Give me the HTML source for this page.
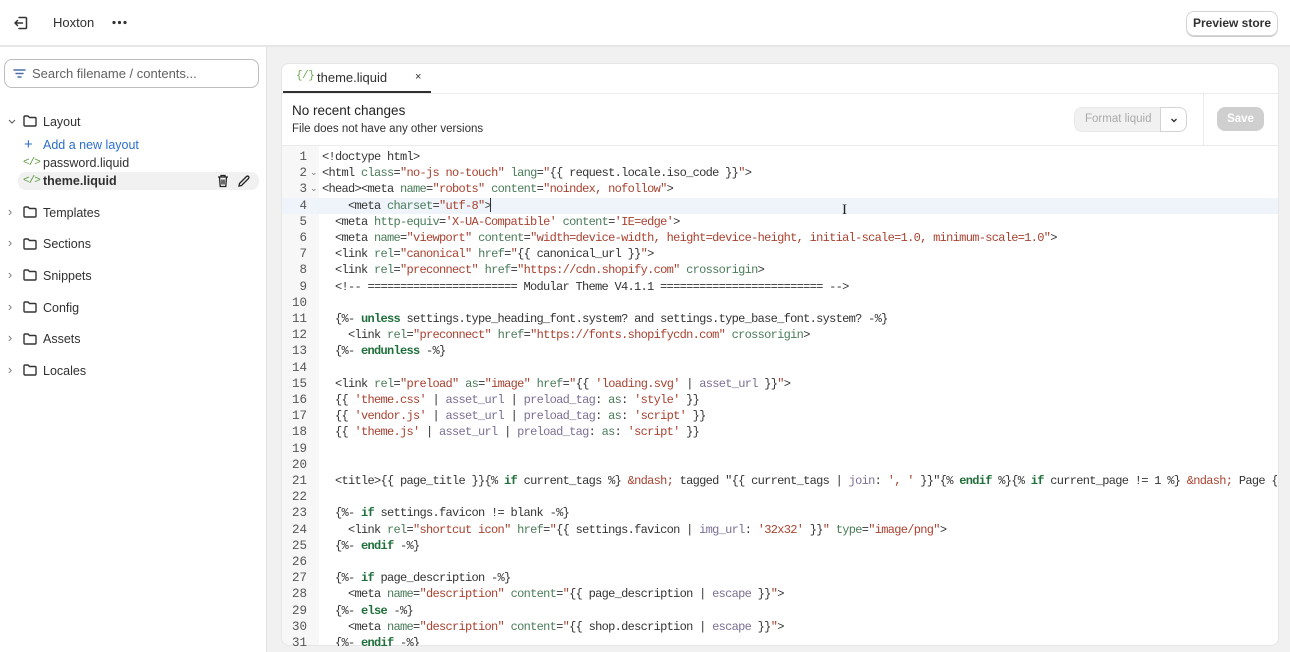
<!DOCTYPE html>
<html><head><meta charset="utf-8">
<style>
*{box-sizing:border-box;margin:0;padding:0}
body{width:1290px;height:652px;overflow:hidden;background:#f1f1f1;font-family:"Liberation Sans",sans-serif;color:#303030;position:relative}
.top{position:absolute;left:0;top:0;width:1290px;height:47px;background:#fff;border-bottom:2px solid #e6e6e6}
.side{position:absolute;left:0;top:47px;width:267px;height:605px;background:#fff;border-right:1px solid #e3e3e3}
.abs{position:absolute}
.card{position:absolute;left:281px;top:63px;width:998px;height:583px;background:#fff;border-radius:8px;border:1px solid #e6e6e6;overflow:hidden}
.code{position:absolute;font-family:"Liberation Mono",monospace;font-size:12px;letter-spacing:-0.7px;color:#333;white-space:pre;line-height:16.2px}
.a{color:#4a7c59}.s{color:#a8412f}.k{color:#1f6f3a;font-weight:bold}.f{color:#7a6f95}
.ln{position:absolute;left:0;width:26px;text-align:right;font-family:"Liberation Mono",monospace;font-size:12.5px;color:#555;line-height:16.2px}
.tree{position:absolute;font-size:12.5px;color:#303030}
.lq{position:absolute;color:#5a9c3c;font-family:'Liberation Mono',monospace;font-size:11px;letter-spacing:-1px}
</style></head><body>
<div class="top">
 <svg class="abs" style="left:13px;top:15px" width="16" height="16" viewBox="0 0 16 16" fill="none" stroke="#333" stroke-width="1.5" stroke-linecap="round" stroke-linejoin="round"><path d="M6 2.5h6.5a1 1 0 0 1 1 1v9a1 1 0 0 1-1 1H6"/><path d="M9.5 8H2M4.5 5.5L2 8l2.5 2.5"/></svg>
 <div class="abs" style="left:53px;top:15px;font-size:13px">Hoxton</div>
 <svg class="abs" style="left:112px;top:20px" width="15" height="5" viewBox="0 0 15 5" fill="#333"><circle cx="2" cy="2.5" r="1.6"/><circle cx="7.5" cy="2.5" r="1.6"/><circle cx="13" cy="2.5" r="1.6"/></svg>
 <div class="abs" style="left:1186px;top:11px;width:92px;height:25px;border:1px solid #d4d4d4;border-radius:8px;box-shadow:0 1px 0 #ccc;font-size:12px;font-weight:bold;text-align:center;line-height:23px;color:#303030">Preview store</div>
</div>
<div class="side">
 <div class="abs" style="left:4px;top:12px;width:255px;height:29px;border:1px solid #bdbdbd;border-radius:8px"></div>
 <svg class="abs" style="left:13px;top:20px" width="13" height="13" viewBox="0 0 13 13" stroke="#4a6fa5" stroke-width="1.4" stroke-linecap="round"><path d="M1 3h11M3 6.5h7M5 10h3"/></svg>
 <div class="abs" style="left:32px;top:19px;font-size:13px;color:#616161">Search filename / contents...</div>
</div>
<svg class="abs" style="left:7px;top:118px" width="10" height="8" viewBox="0 0 10 8" fill="none" stroke="#666" stroke-width="1.2"><path d="M2 2l3 3 3-3"/></svg>
<div class="tree" style="left:22px;top:113px"><svg width="16" height="16" viewBox="0 0 16 16" fill="none" stroke="#333" stroke-width="1.4" stroke-linejoin="round"><path d="M2 4a1 1 0 0 1 1-1h3l1.5 1.5H13a1 1 0 0 1 1 1V12a1 1 0 0 1-1 1H3a1 1 0 0 1-1-1z"/></svg></div>
<div class="tree" style="left:43px;top:115px">Layout</div>
<div class="tree" style="left:24px;top:136px;color:#2c6ecb;font-size:15px">+</div>
<div class="tree" style="left:43px;top:138px;color:#2c6ecb">Add a new layout</div>
<div class="lq" style="left:23px;top:157px">&lt;/&gt;</div>
<div class="tree" style="left:43px;top:156px">password.liquid</div>
<div class="abs" style="left:18px;top:172px;width:241px;height:18px;background:#f1f1f1;border-radius:8px"></div>
<div class="lq" style="left:23px;top:175px">&lt;/&gt;</div>
<div class="tree" style="left:43px;top:174px;font-weight:bold">theme.liquid</div>
<svg class="abs" style="left:216px;top:174px" width="14" height="14" viewBox="0 0 14 14" fill="none" stroke="#222" stroke-width="1.3"><path d="M2 3h10M5 3V1.5h4V3M3.5 3l.7 9.5h5.6L10.5 3M6 5.5v5M8 5.5v5"/></svg>
<svg class="abs" style="left:237px;top:174px" width="14" height="14" viewBox="0 0 14 14" fill="none" stroke="#222" stroke-width="1.3"><path d="M2 12l.5-2.5L9.5 2.5a1.4 1.4 0 0 1 2 2L4.5 11.5z"/></svg>
<div style="position:absolute;left:0;top:0">
 <div class="tree" style="left:8px;top:205px;color:#777">›</div><div class="tree" style="left:22px;top:204px"><svg width="16" height="16" viewBox="0 0 16 16" fill="none" stroke="#333" stroke-width="1.4"><path d="M2 4a1 1 0 0 1 1-1h3l1.5 1.5H13a1 1 0 0 1 1 1V12a1 1 0 0 1-1 1H3a1 1 0 0 1-1-1z"/></svg></div><div class="tree" style="left:43px;top:206px">Templates</div>
 <div class="tree" style="left:8px;top:236px;color:#777">›</div><div class="tree" style="left:22px;top:236px"><svg width="16" height="16" viewBox="0 0 16 16" fill="none" stroke="#333" stroke-width="1.4"><path d="M2 4a1 1 0 0 1 1-1h3l1.5 1.5H13a1 1 0 0 1 1 1V12a1 1 0 0 1-1 1H3a1 1 0 0 1-1-1z"/></svg></div><div class="tree" style="left:43px;top:237px">Sections</div>
 <div class="tree" style="left:8px;top:268px;color:#777">›</div><div class="tree" style="left:22px;top:267px"><svg width="16" height="16" viewBox="0 0 16 16" fill="none" stroke="#333" stroke-width="1.4"><path d="M2 4a1 1 0 0 1 1-1h3l1.5 1.5H13a1 1 0 0 1 1 1V12a1 1 0 0 1-1 1H3a1 1 0 0 1-1-1z"/></svg></div><div class="tree" style="left:43px;top:269px">Snippets</div>
 <div class="tree" style="left:8px;top:300px;color:#777">›</div><div class="tree" style="left:22px;top:299px"><svg width="16" height="16" viewBox="0 0 16 16" fill="none" stroke="#333" stroke-width="1.4"><path d="M2 4a1 1 0 0 1 1-1h3l1.5 1.5H13a1 1 0 0 1 1 1V12a1 1 0 0 1-1 1H3a1 1 0 0 1-1-1z"/></svg></div><div class="tree" style="left:43px;top:301px">Config</div>
 <div class="tree" style="left:8px;top:331px;color:#777">›</div><div class="tree" style="left:22px;top:331px"><svg width="16" height="16" viewBox="0 0 16 16" fill="none" stroke="#333" stroke-width="1.4"><path d="M2 4a1 1 0 0 1 1-1h3l1.5 1.5H13a1 1 0 0 1 1 1V12a1 1 0 0 1-1 1H3a1 1 0 0 1-1-1z"/></svg></div><div class="tree" style="left:43px;top:332px">Assets</div>
 <div class="tree" style="left:8px;top:363px;color:#777">›</div><div class="tree" style="left:22px;top:362px"><svg width="16" height="16" viewBox="0 0 16 16" fill="none" stroke="#333" stroke-width="1.4"><path d="M2 4a1 1 0 0 1 1-1h3l1.5 1.5H13a1 1 0 0 1 1 1V12a1 1 0 0 1-1 1H3a1 1 0 0 1-1-1z"/></svg></div><div class="tree" style="left:43px;top:364px">Locales</div>
</div>

<div class="card">
 <div class="abs" style="left:0;top:29px;width:998px;height:1px;background:#ebebeb"></div>
 <div class="abs" style="left:14px;top:6px;font-size:11px;color:#6aa84f;font-family:'Liberation Mono',monospace;letter-spacing:-0.5px">{/}</div>
 <div class="abs" style="left:35px;top:6px;font-size:13px">theme.liquid</div>
 <div class="abs" style="left:133px;top:7px;font-size:11px">×</div>
 <div class="abs" style="left:1px;top:27px;width:148px;height:2px;background:#303030"></div>
 <div class="abs" style="left:10px;top:39px;font-size:13.5px;color:#222">No recent changes</div>
 <div class="abs" style="left:10px;top:59px;font-size:11.5px;color:#303030">File does not have any other versions</div>
 <div class="abs" style="left:792px;top:43px;width:113px;height:25px;background:#f1f1f1;border:1px solid #e8e8e8;border-radius:8px"></div>
 <div class="abs" style="left:803px;top:49px;font-size:11.5px;color:#aaa">Format liquid</div>
 <div class="abs" style="left:878px;top:43px;width:27px;height:25px;background:#fff;border:1px solid #d4d4d4;border-radius:0 8px 8px 0"></div>
 <svg class="abs" style="left:887px;top:51px" width="10" height="10" viewBox="0 0 10 10" fill="none" stroke="#333" stroke-width="1.4"><path d="M2.5 4l2.5 2.5L7.5 4"/></svg>
 <div class="abs" style="left:921px;top:29px;width:1px;height:52px;background:#ebebeb"></div>
 <div class="abs" style="left:935px;top:43px;width:47px;height:24px;background:#cfcfcf;border-radius:8px;color:#fff;font-size:11.5px;font-weight:bold;text-align:center;line-height:24px">Save</div>
 <div class="abs" style="left:0;top:81px;width:998px;height:1px;background:#ebebeb"></div>
 <div class="abs" style="left:0;top:82px;width:37px;height:510px;background:#f7f7f7"></div>
 <div class="abs" style="left:0;top:134px;width:998px;height:16px;background:#eef4fa"></div>
</div>

<div class="ln" style="left:281px;top:149px">1<br>2<br>3<br>4<br>5<br>6<br>7<br>8<br>9<br>10<br>11<br>12<br>13<br>14<br>15<br>16<br>17<br>18<br>19<br>20<br>21<br>22<br>23<br>24<br>25<br>26<br>27<br>28<br>29<br>30<br>31</div>
<div class="abs" style="left:310px;top:167px;font-size:9px;color:#777">⌄</div>
<div class="abs" style="left:310px;top:183px;font-size:9px;color:#777">⌄</div>
<div class="abs" style="left:0;top:0;width:1277px;height:646px;overflow:hidden">
<div class="code" style="left:322px;top:149px">&lt;!doctype html&gt;
&lt;html <span class="a">class</span>=<span class="s">"no-js no-touch"</span> <span class="a">lang</span>=<span class="s">"</span>{{ request.locale.iso_code }}<span class="s">"</span>&gt;
&lt;head&gt;&lt;meta <span class="a">name</span>=<span class="s">"robots"</span> <span class="a">content</span>=<span class="s">"noindex, nofollow"</span>&gt;
    &lt;meta <span class="a">charset</span>=<span class="s">"utf-8"</span>&gt;
  &lt;meta <span class="a">http-equiv</span>=<span class="s">'X-UA-Compatible'</span> <span class="a">content</span>=<span class="s">'IE=edge'</span>&gt;
  &lt;meta <span class="a">name</span>=<span class="s">"viewport"</span> <span class="a">content</span>=<span class="s">"width=device-width, height=device-height, initial-scale=1.0, minimum-scale=1.0"</span>&gt;
  &lt;link <span class="a">rel</span>=<span class="s">"canonical"</span> <span class="a">href</span>=<span class="s">"</span>{{ canonical_url }}<span class="s">"</span>&gt;
  &lt;link <span class="a">rel</span>=<span class="s">"preconnect"</span> <span class="a">href</span>=<span class="s">"https://cdn.shopify.com"</span> <span class="a">crossorigin</span>&gt;
  &lt;!-- ======================= Modular Theme V4.1.1 ========================= --&gt;

  {%- <span class="k">unless</span> settings.type_heading_font.system? and settings.type_base_font.system? -%}
    &lt;link <span class="a">rel</span>=<span class="s">"preconnect"</span> <span class="a">href</span>=<span class="s">"https://fonts.shopifycdn.com"</span> <span class="a">crossorigin</span>&gt;
  {%- <span class="k">endunless</span> -%}

  &lt;link <span class="a">rel</span>=<span class="s">"preload"</span> <span class="a">as</span>=<span class="s">"image"</span> <span class="a">href</span>=<span class="s">"</span>{{ <span class="s">'loading.svg'</span> | <span class="f">asset_url</span> }}<span class="s">"</span>&gt;
  {{ <span class="s">'theme.css'</span> | <span class="f">asset_url</span> | <span class="f">preload_tag</span>: <span class="a">as</span>: <span class="s">'style'</span> }}
  {{ <span class="s">'vendor.js'</span> | <span class="f">asset_url</span> | <span class="f">preload_tag</span>: <span class="a">as</span>: <span class="s">'script'</span> }}
  {{ <span class="s">'theme.js'</span> | <span class="f">asset_url</span> | <span class="f">preload_tag</span>: <span class="a">as</span>: <span class="s">'script'</span> }}


  &lt;title&gt;{{ page_title }}{% <span class="k">if</span> current_tags %} <span class="s">&amp;ndash;</span> tagged "{{ current_tags | <span class="f">join</span>: <span class="s">', '</span> }}"{% <span class="k">endif</span> %}{% <span class="k">if</span> current_page != 1 %} <span class="s">&amp;ndash;</span> Page {{ current_page }}{% endif %}

  {%- <span class="k">if</span> settings.favicon != blank -%}
    &lt;link <span class="a">rel</span>=<span class="s">"shortcut icon"</span> <span class="a">href</span>=<span class="s">"</span>{{ settings.favicon | <span class="f">img_url</span>: <span class="s">'32x32'</span> }}<span class="s">"</span> <span class="a">type</span>=<span class="s">"image/png"</span>&gt;
  {%- <span class="k">endif</span> -%}

  {%- <span class="k">if</span> page_description -%}
    &lt;meta <span class="a">name</span>=<span class="s">"description"</span> <span class="a">content</span>=<span class="s">"</span>{{ page_description | <span class="f">escape</span> }}<span class="s">"</span>&gt;
  {%- <span class="k">else</span> -%}
    &lt;meta <span class="a">name</span>=<span class="s">"description"</span> <span class="a">content</span>=<span class="s">"</span>{{ shop.description | <span class="f">escape</span> }}<span class="s">"</span>&gt;
  {%- <span class="k">endif</span> -%}</div>
</div>
<div class="abs" style="left:490px;top:198px;width:1px;height:14px;background:#333"></div>
<div class="abs" style="left:842px;top:202px;font-size:15px;color:#222;font-family:'Liberation Serif',serif">I</div>
</body></html>
